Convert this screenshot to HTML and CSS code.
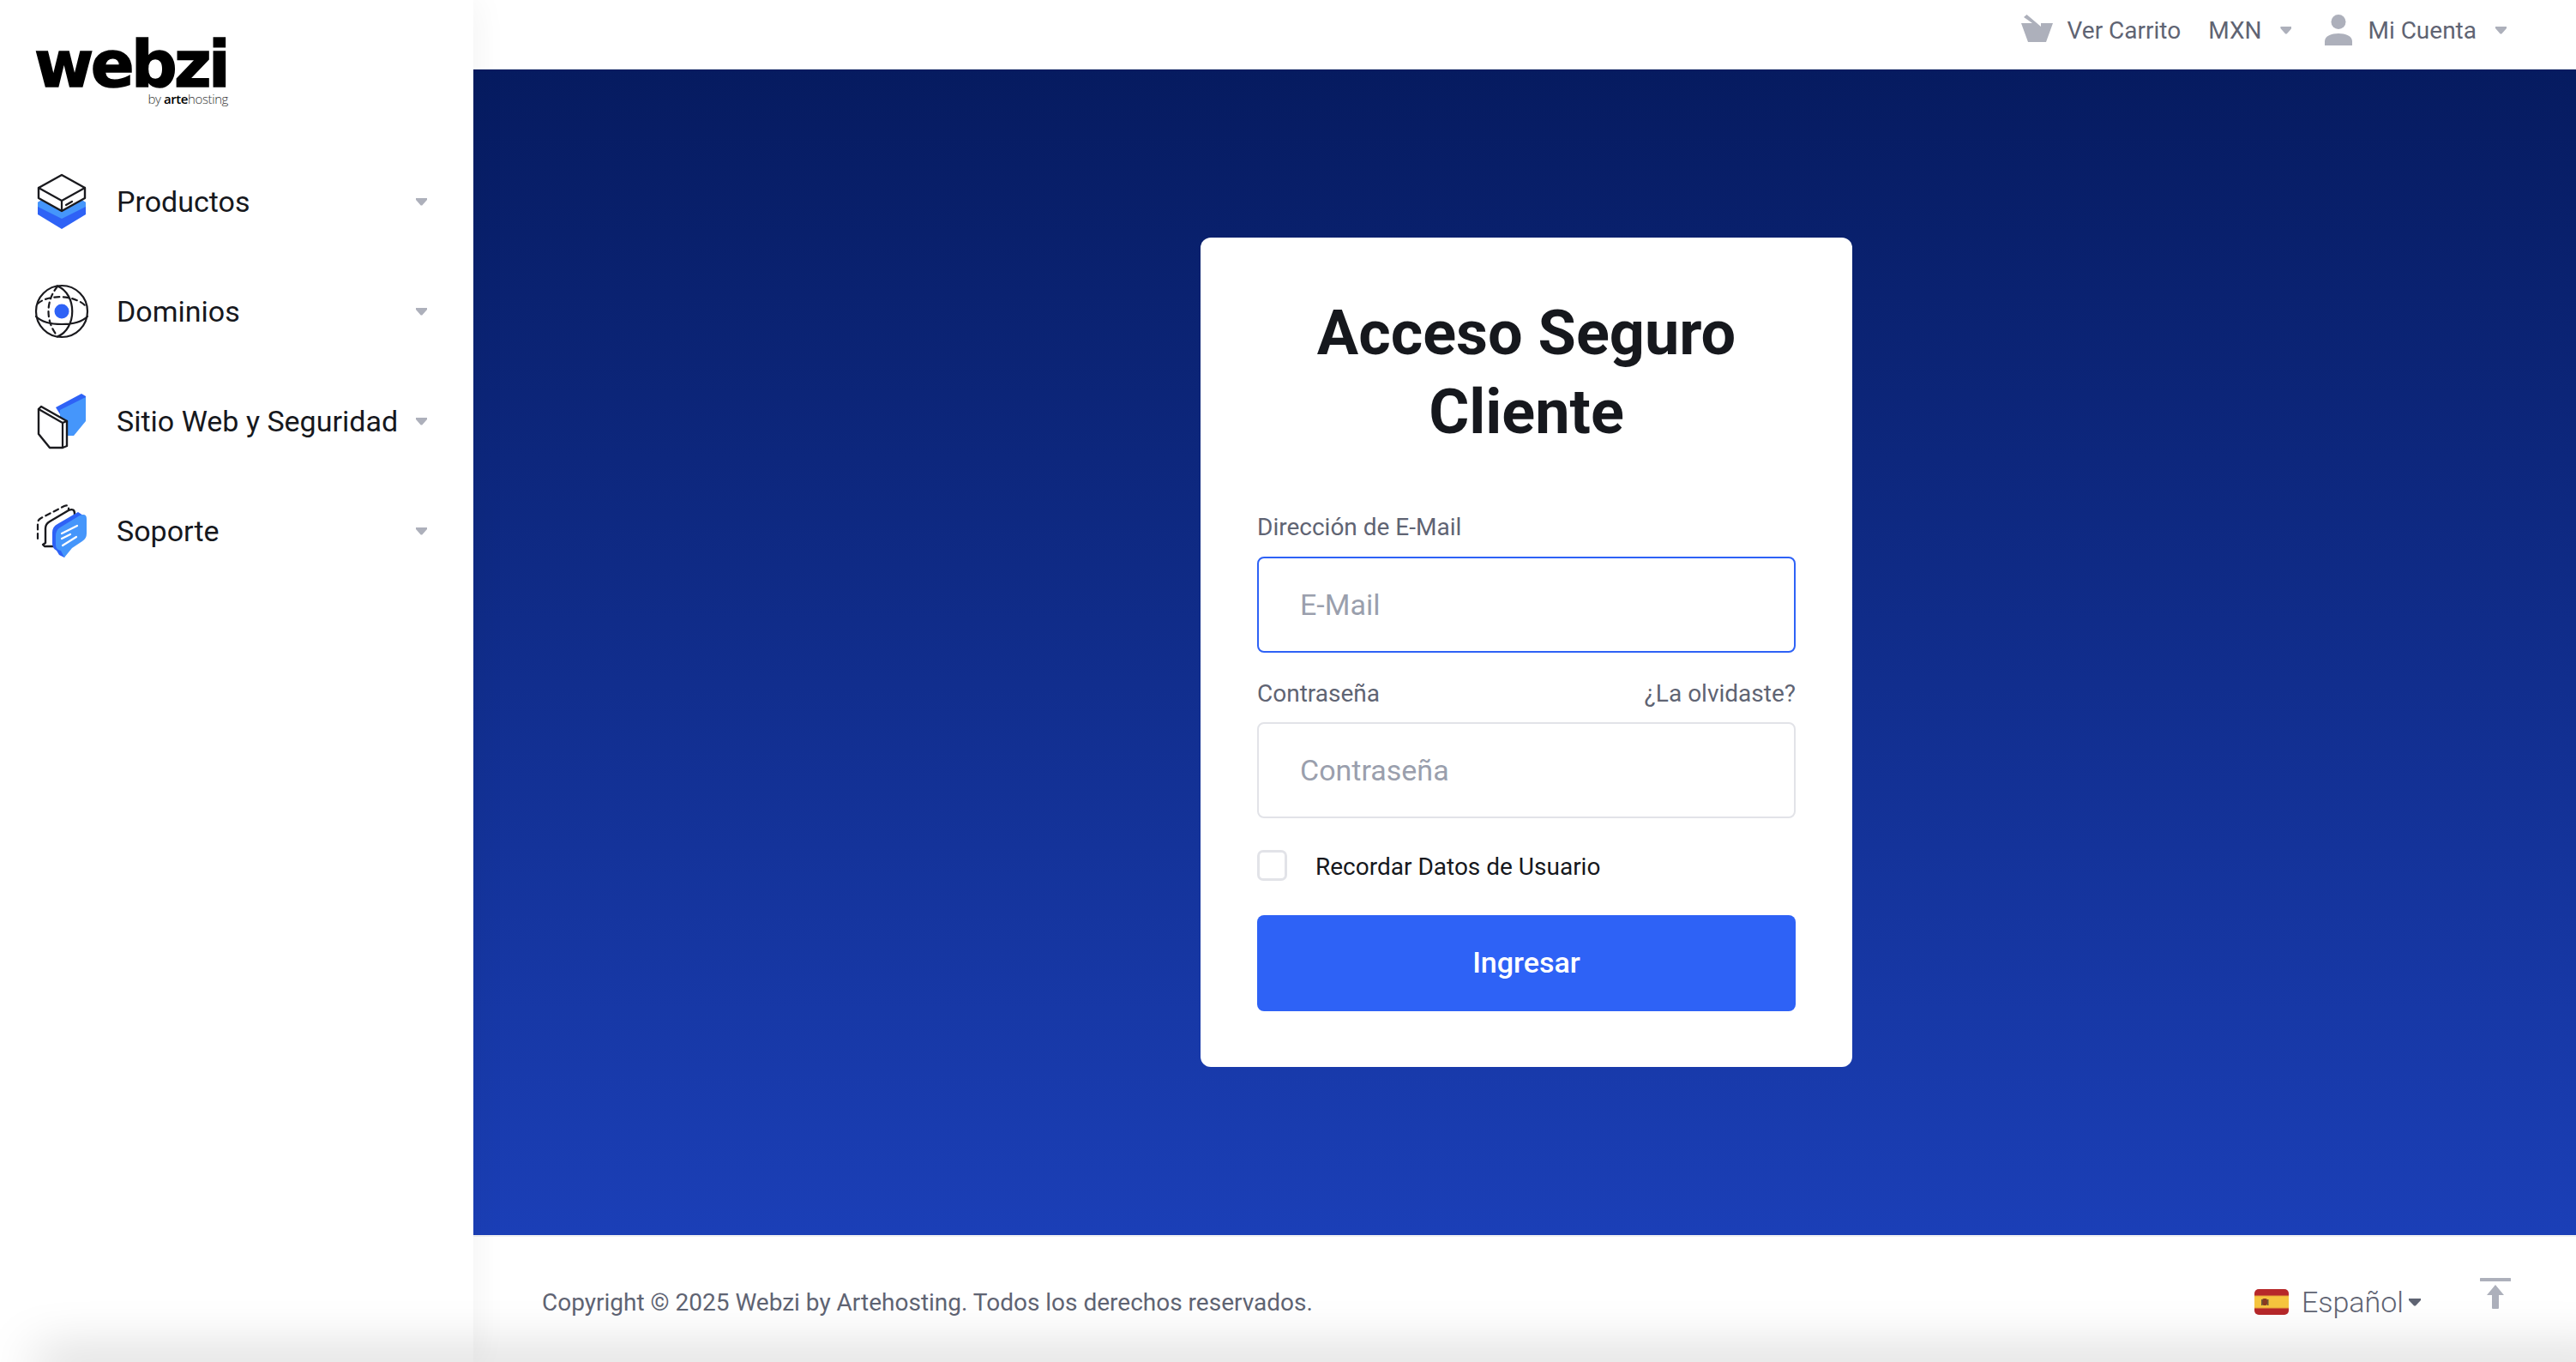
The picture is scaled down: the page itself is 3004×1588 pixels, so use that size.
FILE: index.html
```html
<!DOCTYPE html>
<html lang="es">
<head>
    <meta charset="UTF-8">
    <meta name="viewport" content="width=device-width, initial-scale=1.0">
    <title>Acceso Seguro Cliente - Webzi</title>
    <link rel="stylesheet" href="styles.css">
</head>
<body>

<div class="layout">
    <aside class="sidebar">
        <a class="logo" href="#">
            <span class="logo-name">webzi</span>
            <span class="logo-by">by <b>arte</b>hosting</span>
        </a>

        <nav class="side-nav">
            <a class="side-item" href="#">
                <svg class="side-icon" viewBox="0 0 64 64">
                    <path class="blue-dark" d="M4 33L32 17L60 33V47L32 64L4 47Z"/>
                    <path class="blue-light" d="M4 33L32 17L60 33V38L32 52L4 38Z"/>
                    <path class="line-white" d="M32 1L59 16V28L32 43L5 28V16Z"/>
                    <path class="line" d="M5 16L32 31L59 16M32 31V43M37 36L44 32"/>
                </svg>
                <span class="side-label">Productos</span>
                <span class="caret"></span>
            </a>
            <a class="side-item" href="#">
                <svg class="side-icon" viewBox="0 0 64 64">
                    <circle class="line" cx="32" cy="32" r="30"/>
                    <path class="line" d="M27 2.5C50 12 50 52 27 61.5M2 38C14 50 50 50 62 38"/>
                    <path class="line dashed" d="M27 3C13 20 13 44 27 61M4 23C16 12 48 12 61 27"/>
                    <circle class="dot" cx="32" cy="32" r="8.5"/>
                </svg>
                <span class="side-label">Dominios</span>
                <span class="caret"></span>
            </a>
            <a class="side-item" href="#">
                <svg class="side-icon" viewBox="0 0 64 64">
                    <path class="blue-dark" d="M25 16L55 0L60 3V9L30 24Z"/>
                    <path class="blue-light" d="M30 19L60 4V32L46 49H30Z"/>
                    <path class="line-white" d="M8 15L38 32V61L33 63H18L5 47V18Z"/>
                    <path class="line" d="M5 18L33 34V63M33 34L38 32"/>
                </svg>
                <span class="side-label">Sitio Web y Seguridad</span>
                <span class="caret"></span>
            </a>
            <a class="side-item" href="#">
                <svg class="side-icon" viewBox="0 0 64 64">
                    <path class="line dashed" d="M4 41V23Q4 19 8 17L35 3Q40 1 40 6V10"/>
                    <path class="line-white" d="M13 46V29Q13 24 18 21L40 8Q47 5 47 12V30L25 50H15L12 50L10 48Z"/>
                    <path class="blue-dark" d="M21 38V34Q21 27 27 24L51 10L57 14L35 63L29 60L26 55Q21 52 21 47Z"/>
                    <path class="blue-light" d="M25 38Q25 31 30 28L53 14Q61 11 61 18V35Q61 41 56 44L44 52L35 63L31 55Q25 54 25 48Z"/>
                    <path class="line-light" d="M32 35L50 26M32 41L42 36M33 49L49 39"/>
                </svg>
                <span class="side-label">Soporte</span>
                <span class="caret"></span>
            </a>
        </nav>
    </aside>

    <div class="content">
        <header class="topbar">
            <a class="top-link" href="#">
                <svg class="basket-icon" viewBox="0 0 37 33">
                    <path d="M3 3L6.5 0L23 14V10H37L29 32H8L0 10H13Z"/>
                </svg>
                Ver Carrito
            </a>
            <a class="top-link currency" href="#">MXN <span class="caret"></span></a>
            <a class="top-link account" href="#">
                <svg class="user-icon" viewBox="0 0 34 36">
                    <ellipse cx="17" cy="8.5" rx="8.5" ry="8.5"/>
                    <path d="M1 36V31C1 25 9 22 17 22C25 22 33 25 33 31V36Z"/>
                </svg>
                Mi Cuenta <span class="caret"></span>
            </a>
        </header>

        <main class="login-area">
            <div class="login-card">
                <h1>Acceso Seguro Cliente</h1>
                <form class="login-form">
                    <div class="field">
                        <label class="field-label" for="email">Dirección de E-Mail</label>
                        <input class="field-input is-focus" type="email" id="email" placeholder="E-Mail">
                    </div>
                    <div class="field">
                        <div class="field-head">
                            <label class="field-label" for="pass">Contraseña</label>
                            <a class="forgot" href="#">¿La olvidaste?</a>
                        </div>
                        <input class="field-input" type="password" id="pass" placeholder="Contraseña">
                    </div>
                    <label class="remember">
                        <span class="check-box"></span>
                        Recordar Datos de Usuario
                    </label>
                    <button class="submit-btn" type="button">Ingresar</button>
                </form>
            </div>
        </main>

        <footer class="footer">
            <span class="copyright">Copyright © 2025 Webzi by Artehosting. Todos los derechos reservados.</span>
            <div class="footer-right">
                <a class="lang" href="#">
                    <svg class="flag" viewBox="0 0 40 30">
                        <rect width="40" height="30" rx="5" fill="#b7282a"/>
                        <rect y="7.5" width="40" height="15" fill="#e8a33d"/>
                        <rect y="8.5" width="40" height="13" fill="#f6c53f"/>
                        <rect x="9" y="11" width="6" height="8" rx="2" fill="#8a3b22"/>
                        <path d="M8 12h1.5v7H8zM15 12h1.5v7H15z" fill="#6d5a3a"/>
                    </svg>
                    <span class="lang-name">Español</span>
                    <span class="caret caret-dark"></span>
                </a>
                <a class="to-top" href="#">
                    <svg viewBox="0 0 36 36">
                        <path d="M1 0H35a1 1 0 0 1 0 4H1a1 1 0 0 1 0-4Z"/>
                        <path d="M18 8L28 20H22V35a1 1 0 0 1-1 1H15a1 1 0 0 1-1-1V20H8Z"/>
                    </svg>
                </a>
            </div>
        </footer>
    </div>
</div>

<div class="bottom-fade"></div>

</body>
</html>
```
FILE: styles.css
```css
* {
    box-sizing: border-box;
    margin: 0;
    padding: 0;
}

html, body {
    height: 100%;
    overflow: hidden;
}

body {
    font-family: Roboto, "Liberation Sans", sans-serif;
    background-color: #ffffff;
    color: #16181d;
}

a {
    color: inherit;
    text-decoration: none;
}

.layout {
    display: flex;
    height: 100vh;
}

/* Sidebar */
.sidebar {
    width: 552px;
    flex-shrink: 0;
    background-color: #ffffff;
    box-shadow: 0 0 40px rgba(0, 0, 0, 0.06);
    position: relative;
    z-index: 2;
}

.logo {
    display: block;
    width: 240px;
    height: 171px;
    margin-left: 40px;
    padding-top: 45px;
    color: #000000;
}

.logo-name {
    display: block;
    font-family: "DejaVu Sans", sans-serif;
    font-weight: 700;
    font-size: 75px;
    line-height: 60px;
    letter-spacing: -3.6px;
    -webkit-text-stroke: 1.5px #000000;
}

.logo-by {
    display: block;
    width: 226px;
    text-align: right;
    font-family: "Open Sans", sans-serif;
    font-weight: 300;
    font-size: 15px;
    line-height: 20px;
    letter-spacing: -0.4px;
    color: #333333;
}

.logo-by b {
    font-weight: 600;
    color: #000000;
}

.side-item {
    display: flex;
    align-items: center;
    height: 128px;
    padding: 0 54px 0 40px;
}

.side-icon {
    width: 64px;
    height: 64px;
    flex-shrink: 0;
    overflow: visible;
}

.side-label {
    flex: 1;
    margin-left: 32px;
    font-size: 34px;
    white-space: nowrap;
}

.line {
    fill: none;
    stroke: #1a1a1e;
    stroke-width: 2.2;
    stroke-linejoin: round;
    stroke-linecap: round;
}

.line-white {
    fill: #ffffff;
    stroke: #1a1a1e;
    stroke-width: 2.4;
    stroke-linejoin: round;
}

.line-light {
    fill: none;
    stroke: #ffffff;
    stroke-width: 2.2;
    stroke-linecap: round;
}

.dashed {
    stroke-dasharray: 6 4.5;
}

.dot {
    fill: #2e62f6;
}

.blue-dark {
    fill: #2e62f6;
}

.blue-light {
    fill: #4596fb;
}

.caret {
    display: inline-block;
    width: 13px;
    height: 9px;
    background-color: #adb0bb;
    clip-path: polygon(0 0, 100% 0, 100% 28%, 56% 100%, 44% 100%, 0 28%);
    flex-shrink: 0;
}

.caret-dark {
    width: 14px;
    background-color: #5f6473;
}

/* Top bar */
.content {
    flex: 1;
    min-width: 0;
    display: flex;
    flex-direction: column;
}

.topbar {
    display: flex;
    justify-content: flex-end;
    align-items: center;
    height: 81px;
    flex-shrink: 0;
    padding-right: 81px;
    padding-bottom: 10px;
    border-bottom: 1px solid #f0f0f2;
    font-size: 28px;
    color: #5f6473;
}

.top-link {
    display: flex;
    align-items: center;
}

.basket-icon {
    width: 37px;
    height: 33px;
    margin-top: -4px;
    margin-right: 17px;
    fill: #adb0bb;
}

.currency {
    margin-left: 32px;
    gap: 22px;
}

.account {
    margin-left: 38px;
}

.user-icon {
    width: 34px;
    height: 36px;
    margin-right: 17px;
    fill: #adb0bb;
}

.account .caret {
    margin-left: 22px;
}

/* Login */
.login-area {
    flex: 1;
    display: flex;
    justify-content: center;
    align-items: center;
    padding-left: 4px;
    background: linear-gradient(180deg, #061b60 0%, #1b3fb7 100%);
}

.login-card {
    width: 760px;
    padding: 66px 66px 65px;
    background-color: #ffffff;
    border-radius: 12px;
}

.login-card h1 {
    font-size: 72px;
    line-height: 92px;
    font-weight: 700;
    text-align: center;
    color: #16181d;
    margin-bottom: 68px;
}

.field {
    margin-bottom: 27px;
}

.field-head {
    display: flex;
    justify-content: space-between;
}

.field-label {
    display: block;
    height: 40px;
    margin-bottom: 14px;
    font-size: 28px;
    line-height: 40px;
    color: #5f6473;
}

.field-head .field-label,
.forgot {
    line-height: 42px;
}

.forgot {
    font-size: 28px;
    color: #5f6473;
}

.field-input {
    display: block;
    width: 100%;
    height: 112px;
    padding: 0 48px;
    border: 2px solid #e2e3e8;
    border-radius: 8px;
    font-family: inherit;
    font-size: 34px;
    color: #16181d;
    background-color: #ffffff;
    outline: none;
}

.field-input::placeholder {
    color: #9a9fad;
    opacity: 1;
}

.is-focus {
    border-color: #2e62f6;
}

.remember {
    display: flex;
    align-items: center;
    height: 39px;
    margin-top: 37px;
    font-size: 28px;
    color: #16181d;
}

.check-box {
    align-self: flex-start;
    width: 35px;
    height: 36px;
    margin-right: 33px;
    border: 3px solid #e2e3e8;
    border-radius: 7px;
    background-color: #ffffff;
}

.submit-btn {
    display: block;
    width: 100%;
    height: 112px;
    margin-top: 37px;
    padding-bottom: 2px;
    border: none;
    border-radius: 8px;
    background-color: #2e62f6;
    color: #ffffff;
    font-family: inherit;
    font-size: 34px;
    font-weight: 500;
}

/* Footer */
.footer {
    display: flex;
    justify-content: space-between;
    align-items: center;
    height: 148px;
    flex-shrink: 0;
    padding: 6px 76px 0 80px;
    border-top: 2px solid #f0f0f2;
    font-size: 28px;
    color: #5f6473;
}

.footer-right {
    display: flex;
    align-items: center;
}

.lang {
    display: flex;
    align-items: center;
}

.flag {
    width: 40px;
    height: 30px;
    margin-right: 15px;
}

.lang-name {
    margin-right: 6px;
    font-size: 34px;
    font-weight: 300;
}

.to-top {
    display: block;
    width: 36px;
    height: 36px;
    margin-left: 69px;
    margin-bottom: 20px;
}

.to-top svg {
    display: block;
    width: 36px;
    height: 36px;
    fill: #adb0bb;
}

/* sombra al pie de la ventana */
.bottom-fade {
    position: absolute;
    left: 50px;
    right: -40px;
    bottom: -10px;
    height: 10px;
    box-shadow: 0 0 60px 8px rgba(0, 0, 0, 0.25);
    z-index: 3;
}
```
